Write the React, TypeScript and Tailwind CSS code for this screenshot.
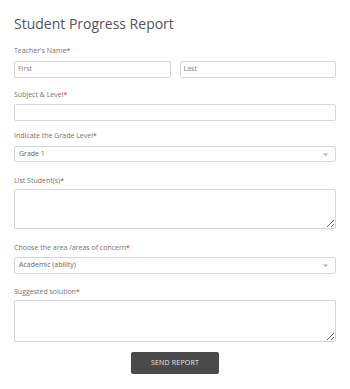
import React from "react";

function Label({ text, className = "" }: { text: string; className?: string }) {
  return (
    <div className={`text-[7px] leading-[10px] text-[#747474] ${className}`}>
      {text}
      <span className="text-[#e0292b]">*</span>
    </div>
  );
}

function Arrow() {
  return (
    <svg width="5" height="4" viewBox="0 0 5 4" className="absolute right-[7px] top-[6px]">
      <path d="M0 0.5 H5 L2.5 3 Z" fill="#a8a8a8" />
    </svg>
  );
}

export default function App() {
  const box = "border border-[#d6d6d6] rounded-[2px] bg-white";
  return (
    <div
      className="w-[350px] h-[389px] bg-white px-[14px] pt-[14px] overflow-hidden"
      style={{ fontFamily: '"Open Sans", "Liberation Sans", sans-serif' }}
    >
      <div className="text-[14px] leading-[20px] text-[#555555]">Student Progress Report</div>

      <Label text="Teacher's Name" className="mt-[12px]" />
      <div className="mt-[5px] flex gap-[9px]">
        <div className={`${box} flex-1 h-[17px] flex items-center pl-[3px] text-[7px] text-[#808080]`}>First</div>
        <div className={`${box} flex-1 h-[17px] flex items-center pl-[3px] text-[7px] text-[#808080]`}>Last</div>
      </div>

      <Label text="Subject & Level" className="mt-[12px]" />
      <div className={`${box} mt-[4px] h-[17px]`} />

      <Label text="Indicate the Grade Level" className="mt-[10px]" />
      <div className={`${box} relative mt-[5px] h-[16px] flex items-center pl-[4px] text-[7px] text-[#666666]`}>
        Grade 1
        <Arrow />
      </div>

      <Label text="List Student(s)" className="mt-[14px]" />
      <textarea className={`${box} block mt-[3px] w-full h-[40px] outline-none`} />

      <Label text="Choose the area /areas of concern" className="mt-[14px]" />
      <div className={`${box} relative mt-[4px] h-[17px] flex items-center pl-[4px] text-[7px] text-[#666666]`}>
        Academic (ability)
        <Arrow />
      </div>

      <Label text="Suggested solution" className="mt-[13px]" />
      <textarea className={`${box} block mt-[3px] w-full h-[42px] outline-none`} />

      <div className="mt-[10px] flex justify-center">
        <div className="w-[88px] h-[22px] bg-[#4a4a4a] rounded-[2px] flex items-center justify-center text-[7px] text-[#e6e6e6] tracking-[0.2px]">
          SEND REPORT
        </div>
      </div>
    </div>
  );
}
